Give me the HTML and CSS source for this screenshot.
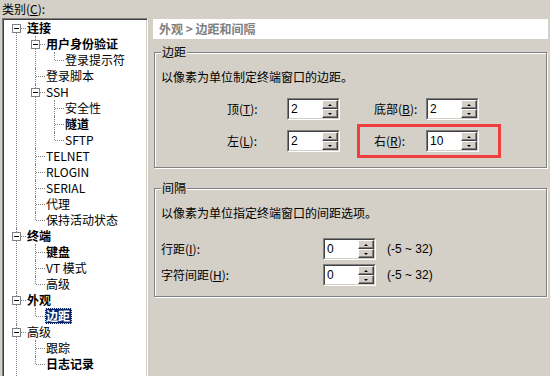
FILE: index.html
```html
<!DOCTYPE html>
<html lang="zh-CN">
<head>
	<meta charset="UTF-8">
	<title>会话选项 - 边距</title>
	<link rel="stylesheet" href="styles.css">
</head>
<body>

	<div class="dialog">
		<div class="side">
			<div class="cat-label">类别(<u>C</u>):</div>
			<div class="tree-box">
				<ul class="tree">
					<li>
						<div class="row"><span class="box"></span><span class="label b">连接</span></div>
						<ul>
							<li>
								<div class="row"><span class="box"></span><span class="label b">用户身份验证</span></div>
								<ul>
									<li><div class="row"><span class="label">登录提示符</span></div></li>
								</ul>
							</li>
							<li><div class="row"><span class="label">登录脚本</span></div></li>
							<li>
								<div class="row"><span class="box"></span><span class="label">SSH</span></div>
								<ul>
									<li><div class="row"><span class="label">安全性</span></div></li>
									<li><div class="row"><span class="label b">隧道</span></div></li>
									<li><div class="row"><span class="label">SFTP</span></div></li>
								</ul>
							</li>
							<li><div class="row"><span class="label">TELNET</span></div></li>
							<li><div class="row"><span class="label">RLOGIN</span></div></li>
							<li><div class="row"><span class="label">SERIAL</span></div></li>
							<li><div class="row"><span class="label">代理</span></div></li>
							<li><div class="row"><span class="label">保持活动状态</span></div></li>
						</ul>
					</li>
					<li>
						<div class="row"><span class="box"></span><span class="label b">终端</span></div>
						<ul>
							<li><div class="row"><span class="label b">键盘</span></div></li>
							<li><div class="row"><span class="label">VT 模式</span></div></li>
							<li><div class="row"><span class="label">高级</span></div></li>
						</ul>
					</li>
					<li>
						<div class="row"><span class="box"></span><span class="label b">外观</span></div>
						<ul>
							<li class="sel"><div class="row"><span class="label b">边距</span></div></li>
						</ul>
					</li>
					<li class="more">
						<div class="row"><span class="box"></span><span class="label">高级</span></div>
						<ul>
							<li><div class="row"><span class="label">跟踪</span></div></li>
							<li><div class="row"><span class="label b">日志记录</span></div></li>
						</ul>
					</li>
				</ul>
			</div>
		</div>

		<div class="panel">
			<div class="title">外观 &gt; 边距和间隔</div>

			<fieldset class="group g-margin">
				<legend>边距</legend>
				<p class="desc">以像素为单位制定终端窗口的边距。</p>

				<div class="mrow">
					<div class="pair first">
						<label>顶(<u>T</u>):</label>
						<div class="spin"><div class="spin-in"><span class="val">2</span><div class="btns"><span class="btn up"></span><span class="btn dn"></span></div></div></div>
					</div>
					<div class="pair second">
						<label>底部(<u>B</u>):</label>
						<div class="spin"><div class="spin-in"><span class="val">2</span><div class="btns"><span class="btn up"></span><span class="btn dn"></span></div></div></div>
					</div>
				</div>

				<div class="mrow">
					<div class="pair first">
						<label>左(<u>L</u>):</label>
						<div class="spin"><div class="spin-in"><span class="val">2</span><div class="btns"><span class="btn up"></span><span class="btn dn"></span></div></div></div>
					</div>
					<div class="pair second mark">
						<label>右(<u>R</u>):</label>
						<div class="spin"><div class="spin-in"><span class="val">10</span><div class="btns"><span class="btn up"></span><span class="btn dn"></span></div></div></div>
					</div>
				</div>
			</fieldset>

			<fieldset class="group g-space">
				<legend>间隔</legend>
				<p class="desc">以像素为单位指定终端窗口的间距选项。</p>

				<div class="srow">
					<label>行距(<u>I</u>):</label>
					<div class="spin"><div class="spin-in"><span class="val">0</span><div class="btns"><span class="btn up"></span><span class="btn dn"></span></div></div></div>
					<span class="range">(-5 ~ 32)</span>
				</div>
				<div class="srow">
					<label>字符间距(<u>H</u>):</label>
					<div class="spin"><div class="spin-in"><span class="val">0</span><div class="btns"><span class="btn up"></span><span class="btn dn"></span></div></div></div>
					<span class="range">(-5 ~ 32)</span>
				</div>
			</fieldset>
		</div>
	</div>

</body>
</html>
```

FILE: styles.css
```css
html, body {
	margin: 0;
	padding: 0;
	width: 550px;
	height: 376px;
	overflow: hidden;
	background: #d4d0c8;
}
body {
	font-family: "Noto Sans CJK SC", sans-serif;
	font-size: 12px;
	color: #000;
}
u {
	text-decoration: underline;
}
.dialog {
	display: flex;
	gap: 5px;
}

/* left: category tree */
.side {
	width: 148px;
	padding-left: 2px;
	box-sizing: border-box;
}
.cat-label {
	height: 18px;
	line-height: 18px;
}
.tree-box {
	width: 146px;
	height: 370px;
	box-sizing: border-box;
	background: #fff;
	border: 1px solid;
	border-color: #808080 #fff #fff #808080;
	box-shadow: inset 1px 1px 0 #404040, inset -1px -1px 0 #d4d0c8;
	padding: 1px 0 0 1px;
	overflow: hidden;
}
.tree, .tree ul {
	list-style: none;
	margin: 0;
	padding: 0;
}
.tree ul {
	padding-left: 19px;
}
.tree li {
	position: relative;
}
.tree li::before {
	content: "";
	position: absolute;
	left: 12px;
	top: 0;
	bottom: 0;
	border-left: 1px dotted #808080;
}
.tree li:last-child::before {
	bottom: auto;
	height: 8px;
}
.tree > li:first-child::before {
	top: 8px;
}
.tree > li.more::before {
	height: auto;
	bottom: -20px;
}
.tree li::after {
	content: "";
	position: absolute;
	left: 13px;
	top: 8px;
	width: 9px;
	border-top: 1px dotted #808080;
}
.row {
	position: relative;
	z-index: 1;
	height: 16px;
	display: flex;
	align-items: center;
}
.box {
	position: absolute;
	left: 8px;
	top: 4px;
	width: 9px;
	height: 9px;
	box-sizing: border-box;
	border: 1px solid #808080;
	background: #fff;
}
.box::after {
	content: "";
	position: absolute;
	left: 1px;
	top: 3px;
	width: 5px;
	height: 1px;
	background: #000;
}
.label {
	margin-left: 22px;
	padding-right: 1px;
	border: 1px solid transparent;
	line-height: 14px;
	white-space: nowrap;
}
.label.b {
	font-weight: bold;
}
.sel .label {
	background: #0a246a;
	color: #fff;
	border: 1px dotted #f5db95;
}

/* right: settings page */
.panel {
	width: 395px;
	padding-top: 19px;
}
.title {
	height: 20px;
	line-height: 20px;
	background: #fff;
	padding-left: 6px;
	color: #808080;
	font-weight: bold;
}
.group {
	margin: 6px 1px 0 1px;
	padding: 10px 6px 15px;
	border: 1px solid #808080;
	box-shadow: 1px 1px 0 #fff, inset 1px 1px 0 #fff;
	min-width: 0;
}
.group legend {
	padding: 0 1px;
	line-height: 14px;
	background: #d4d0c8;
}
.g-space {
	margin-top: 13px;
	padding-bottom: 10px;
}
.desc {
	margin: 0;
	line-height: 16px;
	white-space: nowrap;
}
label {
	line-height: 16px;
	white-space: nowrap;
}

.mrow {
	display: flex;
	align-items: center;
	margin-left: 66px;
	margin-top: 10px;
}
.g-margin .desc + .mrow {
	margin-top: 13px;
}
.pair {
	display: flex;
	align-items: center;
}
.pair.first label {
	width: 60px;
}
.pair.second {
	margin-left: 34px;
}
.pair.second label {
	width: 52px;
}
.mark {
	position: relative;
}
.mark::after {
	content: "";
	position: absolute;
	left: -17px;
	right: -22px;
	top: -6px;
	bottom: -6px;
	border: 3px solid #f03e3e;
}

.srow {
	display: flex;
	align-items: center;
	margin-top: 4px;
}
.desc + .srow {
	margin-top: 17px;
}
.srow label {
	width: 162px;
}
.range {
	margin-left: 11px;
	font-family: "Liberation Sans", sans-serif;
}

/* spin box */
.spin {
	width: 53px;
	height: 22px;
	box-sizing: border-box;
	border: 1px solid;
	border-color: #808080 #fff #fff #808080;
}
.spin-in {
	height: 100%;
	box-sizing: border-box;
	border: 1px solid;
	border-color: #404040 #d4d0c8 #d4d0c8 #404040;
	background: #fff;
	display: flex;
}
.val {
	flex: 1;
	padding-left: 2px;
	font-family: "Liberation Sans", sans-serif;
	line-height: 18px;
}
.btns {
	width: 16px;
	display: flex;
	flex-direction: column;
}
.btn {
	flex: 1;
	box-sizing: border-box;
	background: #d4d0c8;
	border: 1px solid;
	border-color: #fff #404040 #404040 #fff;
	box-shadow: inset -1px -1px 0 #808080;
	display: flex;
	align-items: center;
	justify-content: center;
}
.btn::before {
	content: "";
	width: 0;
	height: 0;
	border-left: 2px solid transparent;
	border-right: 2px solid transparent;
}
.btn.up::before {
	border-bottom: 2px solid #000;
}
.btn.dn::before {
	border-top: 2px solid #000;
}
```
